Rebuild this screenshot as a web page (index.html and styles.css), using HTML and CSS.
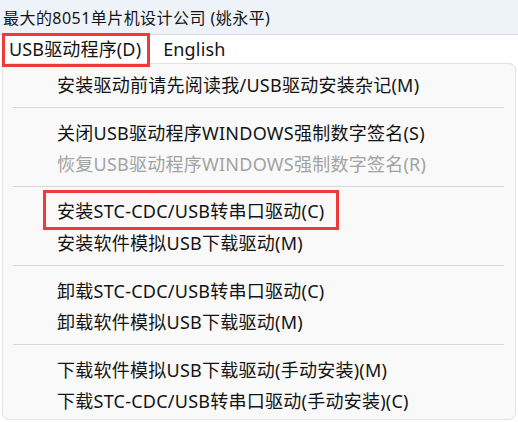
FILE: index.html
```html
<!DOCTYPE html>
<html lang="zh-CN">
<head>
<meta charset="utf-8">
<title>USB驱动程序</title>
<link rel="stylesheet" href="styles.css">
</head>
<body>
<div class="titlebar"><span class="title">最大的8051单片机设计公司 (姚永平)</span></div>
<div class="menubar">
  <div class="mb-item marked">USB驱动程序(D)</div>
  <div class="mb-item">English</div>
</div>
<div class="menu">
  <div class="item">安装驱动前请先阅读我/USB驱动安装杂记(M)</div>
  <div class="sep"></div>
  <div class="item">关闭USB驱动程序WINDOWS强制数字签名(S)</div>
  <div class="item disabled">恢复USB驱动程序WINDOWS强制数字签名(R)</div>
  <div class="sep"></div>
  <div class="item"><span class="hl">安装STC-CDC/USB转串口驱动(C)</span></div>
  <div class="item">安装软件模拟USB下载驱动(M)</div>
  <div class="sep"></div>
  <div class="item">卸载STC-CDC/USB转串口驱动(C)</div>
  <div class="item">卸载软件模拟USB下载驱动(M)</div>
  <div class="sep"></div>
  <div class="item">下载软件模拟USB下载驱动(手动安装)(M)</div>
  <div class="item">下载STC-CDC/USB转串口驱动(手动安装)(C)</div>
</div>
</body>
</html>
```

FILE: styles.css
```css
* { box-sizing: border-box; }
html, body {
  margin: 0;
  padding: 0;
  background: #ffffff;
  width: 518px;
  height: 422px;
  overflow: hidden;
  font-family: "Noto Sans", "Noto Sans CJK SC", sans-serif;
  color: #141414;
}
.titlebar {
  height: 35px;
  background: #eef2f9;
  border-bottom: 1px solid #d9dce2;
  display: flex;
  align-items: center;
  padding-left: 3px;
  font-size: 16px;
  letter-spacing: 0.45px;
  white-space: nowrap;
}
.menubar {
  height: 28px;
  display: flex;
  align-items: center;
  font-size: 18px;
  letter-spacing: 0.15px;
  background: #ffffff;
}
.mb-item {
  position: relative;
  padding: 0 9px 0 9px;
  line-height: 20px;
  white-space: nowrap;
}
.mb-item + .mb-item { padding-left: 13px; }
.marked::after {
  content: "";
  position: absolute;
  left: 2px;
  right: 0;
  top: -6px;
  bottom: -8px;
  border: 3px solid #f03a3a;
}
.menu {
  margin-left: 2px;
  width: 514px;
  background: #f9f9f9;
  border: 1px solid #e2e2e2;
  border-radius: 7px;
  padding: 4px 0;
  font-size: 18px;
  letter-spacing: 0.25px;
}
.item {
  height: 31px;
  display: flex;
  align-items: center;
  padding-left: 54px;
  white-space: nowrap;
}
.item.disabled { color: #a3a3a3; }
.sep {
  height: 1px;
  margin: 8px 11px 8px 10px;
  background: #d8d8d8;
}
.hl {
  position: relative;
  line-height: 20px;
}
.hl::after {
  content: "";
  position: absolute;
  left: -14px;
  right: -15px;
  top: -11px;
  bottom: -9px;
  border: 3px solid #f03a3a;
}
```
